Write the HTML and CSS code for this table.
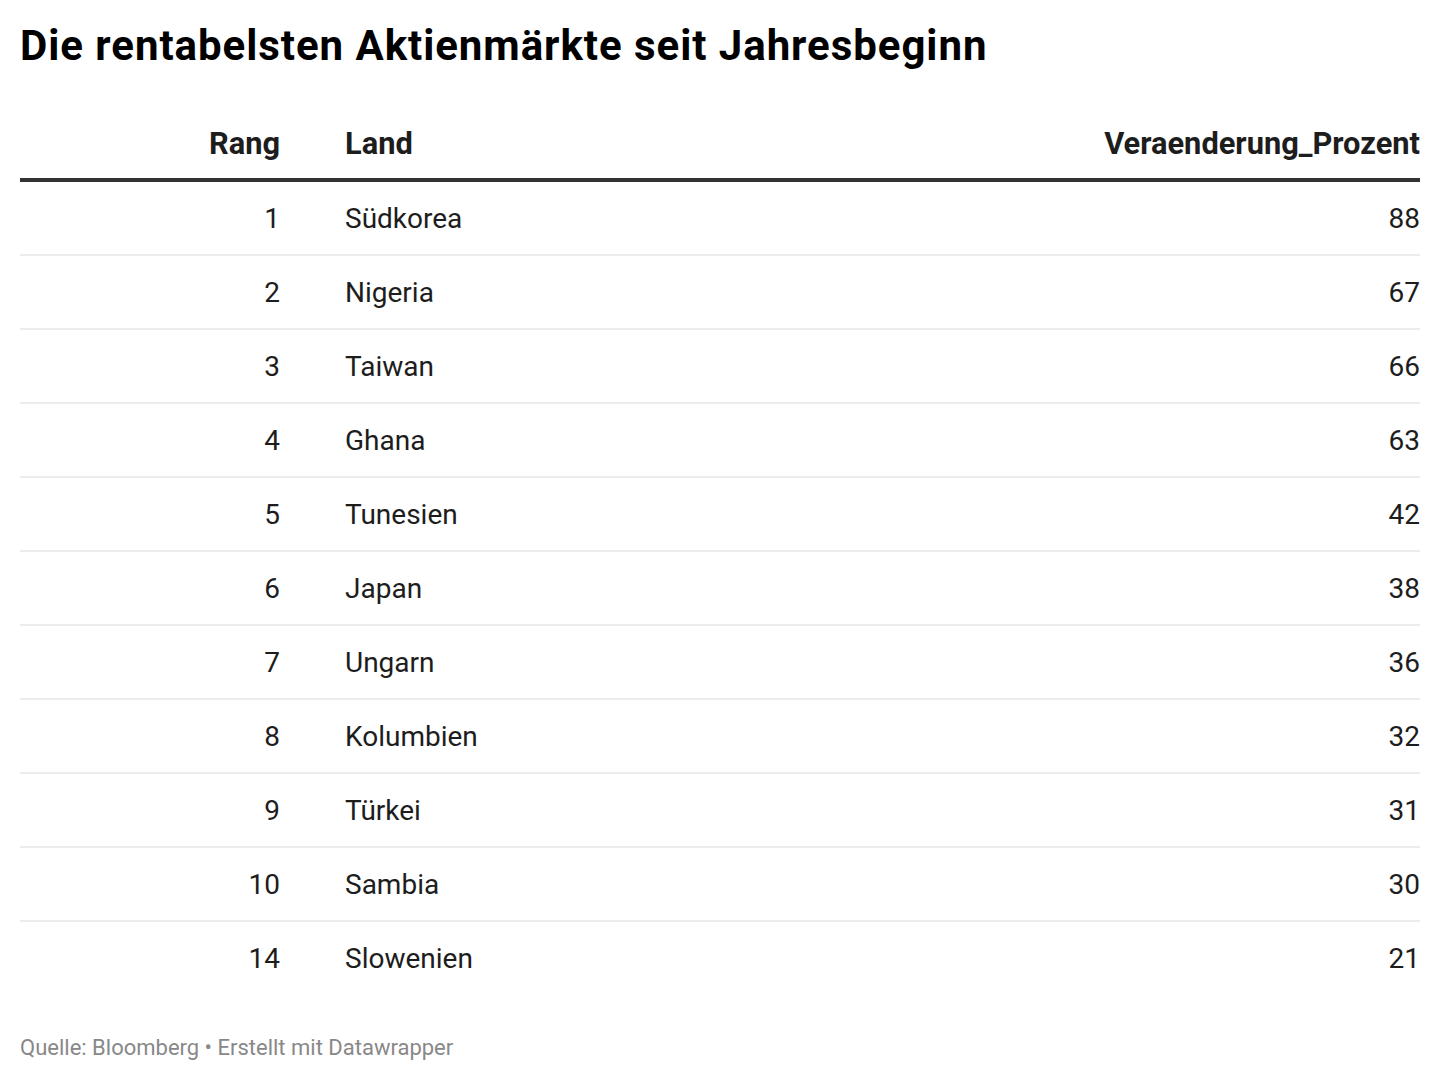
FILE: index.html
```html
<!DOCTYPE html>
<html lang="de">
<head>
<meta charset="utf-8">
<link rel="stylesheet" href="styles.css">
<title>Die rentabelsten Aktienmärkte seit Jahresbeginn</title>
</head>
<body>
<div class="chart">
  <h1 class="title">Die rentabelsten Aktienmärkte seit Jahresbeginn</h1>
  <table class="tbl">
    <thead>
      <tr>
        <th class="c-rank">Rang</th>
        <th class="c-land">Land</th>
        <th class="c-val">Veraenderung_Prozent</th>
      </tr>
    </thead>
    <tbody>
      <tr><td class="c-rank">1</td><td class="c-land">Südkorea</td><td class="c-val">88</td></tr>
      <tr><td class="c-rank">2</td><td class="c-land">Nigeria</td><td class="c-val">67</td></tr>
      <tr><td class="c-rank">3</td><td class="c-land">Taiwan</td><td class="c-val">66</td></tr>
      <tr><td class="c-rank">4</td><td class="c-land">Ghana</td><td class="c-val">63</td></tr>
      <tr><td class="c-rank">5</td><td class="c-land">Tunesien</td><td class="c-val">42</td></tr>
      <tr><td class="c-rank">6</td><td class="c-land">Japan</td><td class="c-val">38</td></tr>
      <tr><td class="c-rank">7</td><td class="c-land">Ungarn</td><td class="c-val">36</td></tr>
      <tr><td class="c-rank">8</td><td class="c-land">Kolumbien</td><td class="c-val">32</td></tr>
      <tr><td class="c-rank">9</td><td class="c-land">Türkei</td><td class="c-val">31</td></tr>
      <tr><td class="c-rank">10</td><td class="c-land">Sambia</td><td class="c-val">30</td></tr>
      <tr><td class="c-rank">14</td><td class="c-land">Slowenien</td><td class="c-val">21</td></tr>
    </tbody>
  </table>
  <div class="footer">Quelle: Bloomberg • Erstellt mit Datawrapper</div>
</div>
</body>
</html>
```

FILE: styles.css
```css
html, body {
  margin: 0;
  padding: 0;
  background: #ffffff;
}
body {
  font-family: Roboto, "Liberation Sans", Arial, sans-serif;
  color: #1d1d1d;
}
.chart {
  padding: 22px 20px 0 20px;
}
.title {
  margin: 0 0 56px 0;
  font-size: 42px;
  line-height: 48px;
  letter-spacing: 0.95px;
  font-weight: 700;
  color: #000000;
}
.tbl {
  width: 1400px;
  border-collapse: collapse;
  table-layout: fixed;
}
.tbl th {
  font-size: 30.8px;
  line-height: 36px;
  font-weight: 700;
  padding: 0 0 16px 0;
  border-bottom: 4px solid #333333;
  color: #1d1d1d;
}
.tbl td {
  font-size: 28px;
  line-height: 32px;
  padding: 21px 0 19px 0;
  border-bottom: 2px solid #ececec;
}
.tbl tbody tr:last-child td {
  border-bottom: none;
}
.c-rank {
  width: 260px;
  text-align: right;
  padding-right: 32px !important;
}
.c-land {
  width: 640px;
  text-align: left;
  padding-left: 33px !important;
}
.c-val {
  text-align: right;
}
.footer {
  margin-top: 41px;
  font-size: 22px;
  line-height: 26px;
  color: #888888;
}
```
